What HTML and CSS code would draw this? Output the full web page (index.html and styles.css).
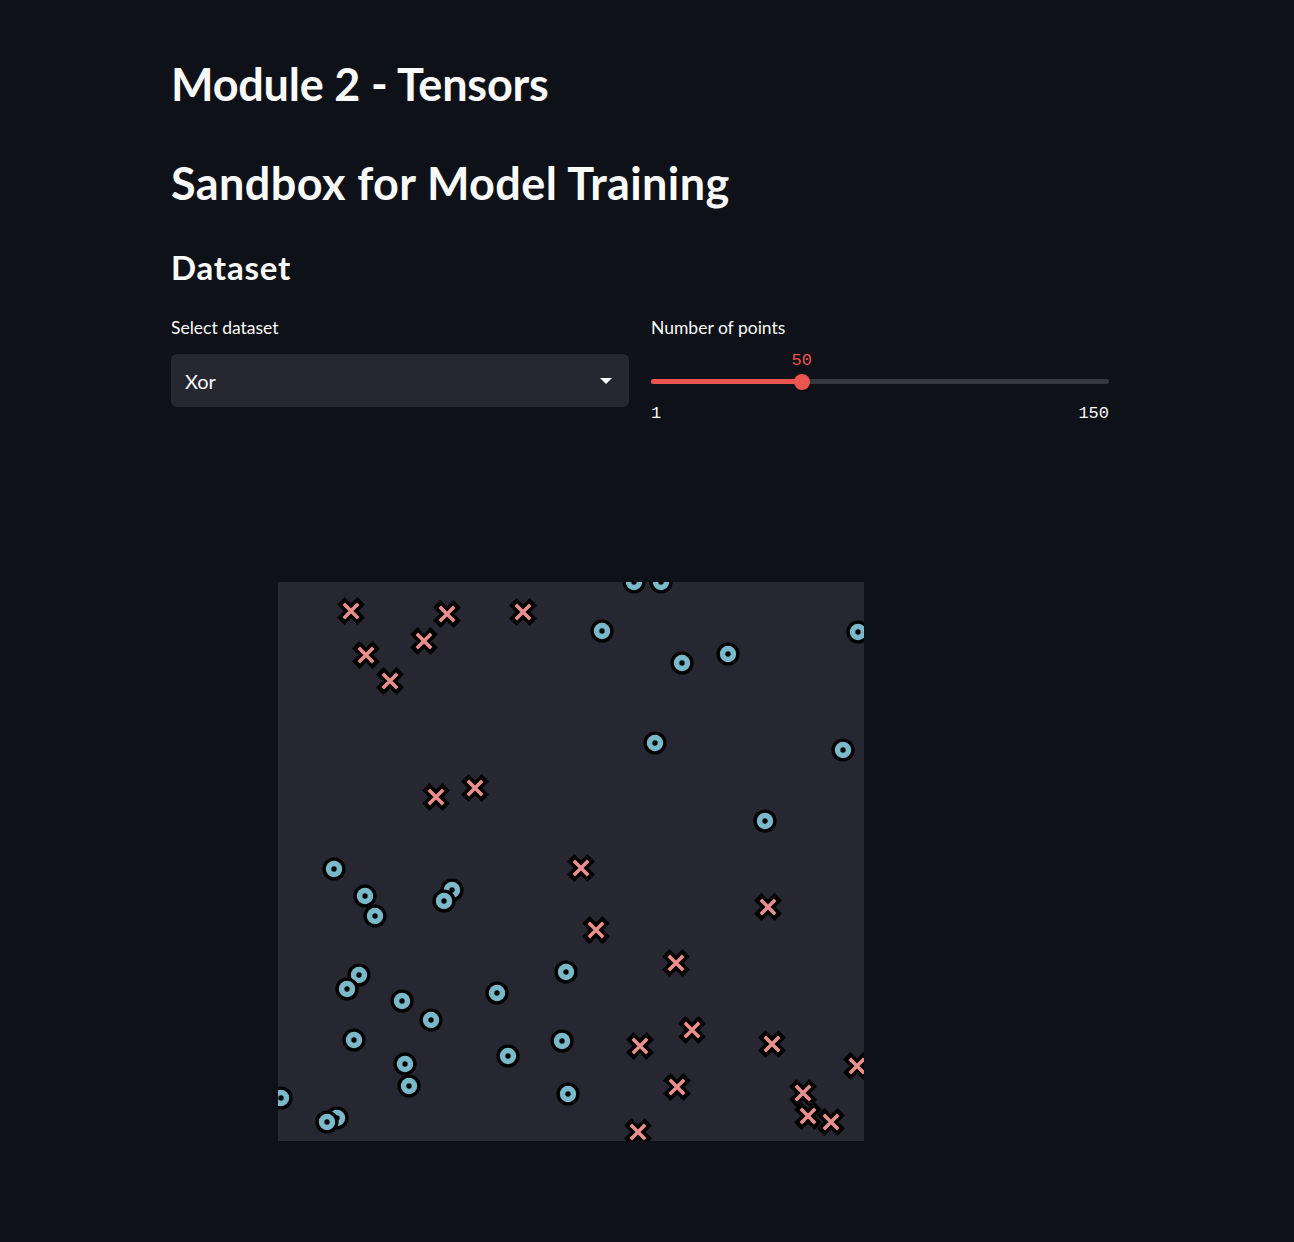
FILE: index.html
```html
<!DOCTYPE html>
<html lang="en">
<head>
  <meta charset="UTF-8" />
  <meta name="viewport" content="width=device-width, initial-scale=1.0"/>
  <title>Module 2 - Tensors</title>
  <link rel="stylesheet" href="styles.css">
</head>
<body>
  <main class="main-block">
    <h1 class="page-title">Module 2 - Tensors</h1>
    <h1 class="page-title sub">Sandbox for Model Training</h1>
    <h3 class="section-title">Dataset</h3>

    <div class="controls">
      <div class="control">
        <label class="control-label">Select dataset</label>
        <div class="select-box">
          <span class="select-value">Xor</span>
          <svg class="select-arrow" width="12" height="6" viewBox="0 0 12 6">
            <path d="M0 0h12L6 6z" fill="#fafafa"></path>
          </svg>
        </div>
      </div>

      <div class="control">
        <label class="control-label">Number of points</label>
        <div class="slider">
          <div class="slider-track">
            <div class="slider-fill" style="width: 32.9%"></div>
            <div class="slider-thumb" style="left: 32.9%">
              <span class="slider-value">50</span>
            </div>
          </div>
          <div class="slider-ticks">
            <span>1</span>
            <span>150</span>
          </div>
        </div>
      </div>
    </div>

    <div class="chart-wrapper">
      <svg class="chart" width="586" height="559" viewBox="0 0 586 559">
        <defs>
          <g id="dot">
            <circle r="11.6" fill="#000"></circle>
            <circle r="8.2" fill="#7ab9ca"></circle>
            <circle r="2.7" fill="#000"></circle>
          </g>
          <g id="cross">
            <path d="M-6.5 -6.5L6.5 6.5M6.5 -6.5L-6.5 6.5" stroke="#000" stroke-width="10.5" stroke-linecap="square"></path>
            <path d="M-7.2 -7.2L7.2 7.2M7.2 -7.2L-7.2 7.2" stroke="#e9908d" stroke-width="3.6"></path>
          </g>
        </defs>
        <rect width="586" height="559" fill="#262730"></rect>
        <g id="points"></g>
      </svg>
    </div>
  </main>

  <script>
    // screen positions of the sampled points, shifted into chart space below
    const dots = [
      [634, 581], [661, 581], [602, 630], [682, 662], [728, 653], [858, 631],
      [655, 742], [843, 749], [765, 820], [334, 868], [365, 895], [375, 915],
      [452, 889], [444, 900], [359, 974], [347, 988], [402, 1000], [431, 1019],
      [497, 992], [566, 971], [354, 1039], [405, 1063], [409, 1085], [508, 1055],
      [562, 1040], [568, 1093], [281, 1097], [337, 1117], [327, 1121]
    ];
    const crosses = [
      [351, 610], [447, 613], [523, 611], [366, 654], [424, 640], [390, 680],
      [436, 796], [475, 787], [581, 867], [596, 929], [768, 906], [676, 962],
      [692, 1029], [640, 1045], [772, 1043], [857, 1065], [677, 1086], [803, 1092],
      [808, 1115], [831, 1121], [638, 1131]
    ];

    const group = document.getElementById("points");
    const ns = "http://www.w3.org/2000/svg";

    function addMarker(id, x, y) {
      const use = document.createElementNS(ns, "use");
      use.setAttribute("href", "#" + id);
      use.setAttribute("x", x - 278);
      use.setAttribute("y", y - 581);
      group.appendChild(use);
    }

    dots.forEach(p => addMarker("dot", p[0], p[1]));
    crosses.forEach(p => addMarker("cross", p[0], p[1]));
  </script>
</body>
</html>
```

FILE: styles.css
```css
html, body {
  margin: 0;
  background: #0e1117;
}

body {
  font-family: Lato, "Open Sans", sans-serif;
  color: #fafafa;
  min-height: 1242px;
}

.main-block {
  width: 938px;
  margin-left: 171px;
  padding-top: 56px;
}

.page-title {
  font-size: 45px;
  font-weight: 700;
  line-height: 56px;
  margin: 0 0 43px 0;
  letter-spacing: -0.2px;
}

.page-title.sub {
  margin-bottom: 36px;
  letter-spacing: 0.4px;
}

.section-title {
  font-size: 33px;
  font-weight: 700;
  line-height: 40px;
  margin: 0 0 30px 0;
  letter-spacing: 0.8px;
}

.controls {
  display: flex;
  gap: 22px;
}

.control {
  flex: 1;
  display: flex;
  flex-direction: column;
}

.control-label {
  font-size: 17.5px;
  line-height: 22px;
  margin-bottom: 15px;
}

.select-box {
  height: 53px;
  background: #262730;
  border-radius: 6px;
  display: flex;
  align-items: center;
  justify-content: space-between;
  padding: 0 17px 0 14px;
}

.select-value {
  font-size: 20px;
}

.slider {
  padding-top: 25px;
}

.slider-track {
  position: relative;
  height: 5px;
  border-radius: 3px;
  background: #363841;
}

.slider-fill {
  height: 100%;
  border-radius: 3px;
  background: #ea5550;
}

.slider-thumb {
  position: absolute;
  top: 50%;
  width: 16px;
  height: 16px;
  margin: -8px 0 0 -8px;
  border-radius: 50%;
  background: #ea5550;
}

.slider-value {
  position: absolute;
  bottom: 20px;
  left: 50%;
  transform: translateX(-50%);
  font-family: "Liberation Mono", "DejaVu Sans Mono", monospace;
  font-size: 17px;
  color: #ea5550;
}

.slider-ticks {
  display: flex;
  justify-content: space-between;
  margin-top: 19px;
  font-family: "Liberation Mono", "DejaVu Sans Mono", monospace;
  font-size: 17px;
  line-height: 22px;
}

.chart-wrapper {
  margin-top: 157px;
  padding-left: 107px;
}

.chart {
  display: block;
}
```
